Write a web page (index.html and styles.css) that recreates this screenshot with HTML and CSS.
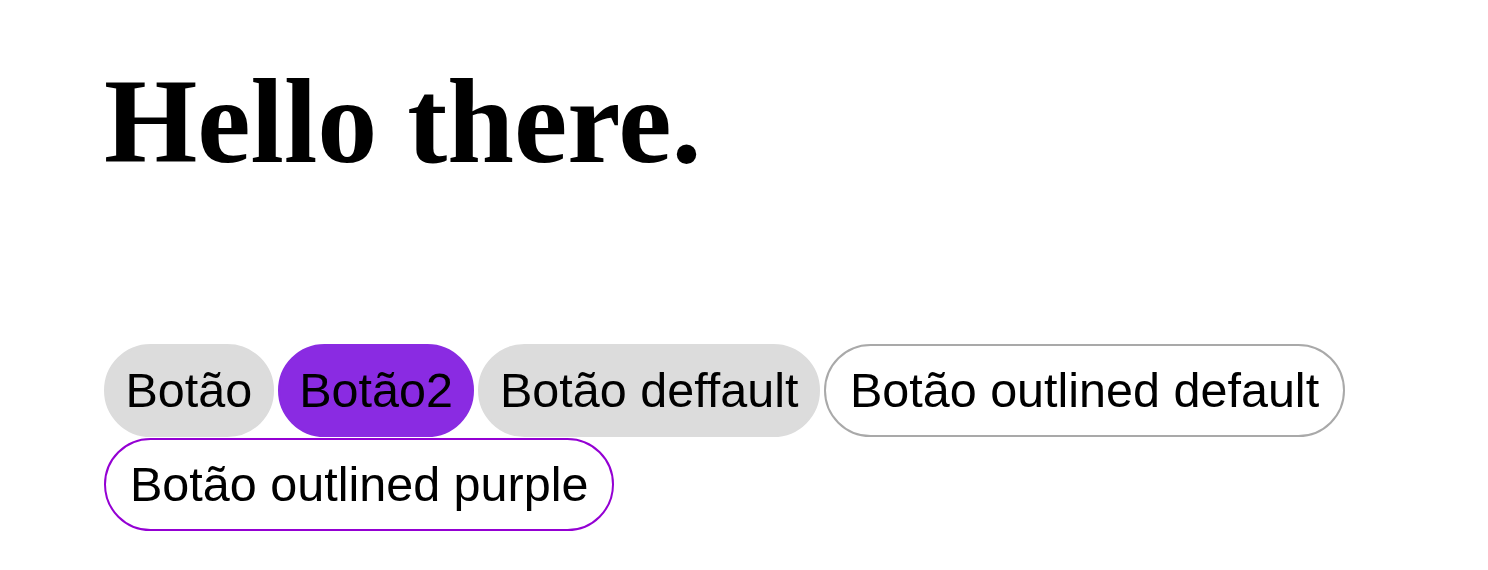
FILE: index.html
```html
<!DOCTYPE html>
<html lang="pt">
<head>
<meta charset="utf-8">
<title>Hello there.</title>
<link rel="stylesheet" href="styles.css">
</head>
<body>
<main class="page">
  <h1 class="title">Hello there.</h1>
  <div class="buttons">
    <button class="btn btn-gray">Botão</button>
    <button class="btn btn-purple">Botão2</button>
    <button class="btn btn-gray">Botão deffault</button>
    <button class="btn btn-outline btn-outline-gray">Botão outlined default</button>
    <button class="btn btn-outline btn-outline-purple">Botão outlined purple</button>
  </div>
</main>
</body>
</html>
```
FILE: styles.css
```css
html, body {
  margin: 0;
  padding: 0;
  background: #ffffff;
}

.page {
  padding: 53px 104px 0 104px;
}

.title {
  margin: 0;
  font-family: "Liberation Serif", "Times New Roman", serif;
  font-weight: bold;
  font-size: 120px;
  color: #000;
}

.buttons {
  margin-top: 153px;
  display: flex;
  flex-wrap: wrap;
  column-gap: 4px;
  row-gap: 1px;
}

.btn {
  font-family: "Liberation Sans", Arial, sans-serif;
  font-size: 48.5px;
  line-height: 55px;
  color: #000;
  padding: 17px 19.5px;
  border: 2px solid transparent;
  border-radius: 999px;
  cursor: pointer;
}

.btn-outline {
  padding-left: 24px;
  padding-right: 24px;
  background: #fff;
}

.btn-gray {
  background: #dcdcdc;
  border-color: #dcdcdc;
}

.btn-purple {
  background: #8a2be2;
  border-color: #8a2be2;
}

.btn-outline-gray {
  border-color: #a9a9a9;
}

.btn-outline-purple {
  border-color: #9400d3;
}
```
